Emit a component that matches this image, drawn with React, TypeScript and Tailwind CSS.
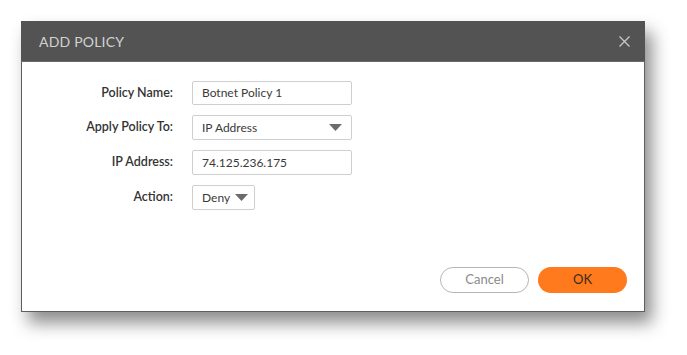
import React from 'react';

const labelCls = "w-[170px] pr-[19px] text-right text-[12.5px] font-semibold text-[#333]";
const fieldText = "text-[12px] text-[#3a3a3a]";

const Caret = () => (
  <svg width="13" height="7" viewBox="0 0 13 7" className="shrink-0">
    <path d="M0 0 L13 0 L6.5 7 Z" fill="#6b6b6b" />
  </svg>
);

export default function App() {
  return (
    <div className="min-h-[355px] w-[687px] bg-white pl-[21px] pt-[21px] font-['Lato',sans-serif]">
      <div className="flex h-[291px] w-[624px] flex-col border-x border-b border-[#5e5e5e] bg-white shadow-[7px_11px_16px_rgba(0,0,0,0.45)]">
        {/* header */}
        <div className="-mx-px flex h-[41px] shrink-0 items-center justify-between border-b border-[#6a6a6a] bg-[#535353] pl-[18px] pr-[15px]">
          <span className="text-[14px] tracking-[0.2px] text-[#d2d2d2]">ADD POLICY</span>
          <svg width="11" height="11" viewBox="0 0 11 11">
            <path d="M0.5 0.5 L10.5 10.5 M10.5 0.5 L0.5 10.5" stroke="#c8c8c8" strokeWidth="1.3" />
          </svg>
        </div>

        {/* form */}
        <div className="flex flex-col gap-[10px] pt-[19px]">
          <div className="flex items-center">
            <div className={labelCls}>Policy Name:</div>
            <div className={`flex h-[24px] w-[160px] items-center rounded-[2px] border border-[#cfcfcf] px-[9px] ${fieldText}`}>
              Botnet Policy 1
            </div>
          </div>
          <div className="flex items-center">
            <div className={labelCls}>Apply Policy To:</div>
            <div className={`flex h-[25px] w-[160px] items-center justify-between rounded-[2px] border border-[#cfcfcf] pl-[9px] pr-[9px] ${fieldText}`}>
              IP Address
              <Caret />
            </div>
          </div>
          <div className="flex items-center">
            <div className={labelCls}>IP Address:</div>
            <div className={`flex h-[25px] w-[160px] items-center rounded-[2px] border border-[#cfcfcf] px-[9px] ${fieldText}`}>
              74.125.236.175
            </div>
          </div>
          <div className="flex items-center">
            <div className={labelCls}>Action:</div>
            <div className={`flex h-[25px] w-[63px] items-center justify-between rounded-[2px] border border-[#cfcfcf] pl-[9px] pr-[6px] ${fieldText}`}>
              Deny
              <Caret />
            </div>
          </div>
        </div>

        {/* footer */}
        <div className="mt-auto flex justify-end gap-[9px] pb-[18px] pr-[17px]">
          <button className="flex h-[26px] w-[89px] items-center justify-center rounded-full border border-[#b5b5b5] bg-white text-[13px] text-[#8a8a8a]">
            Cancel
          </button>
          <button className="flex h-[26px] w-[89px] items-center justify-center rounded-full bg-[#ff7a1c] text-[13px] text-[#3a2a1a]">
            OK
          </button>
        </div>
      </div>
    </div>
  );
}
